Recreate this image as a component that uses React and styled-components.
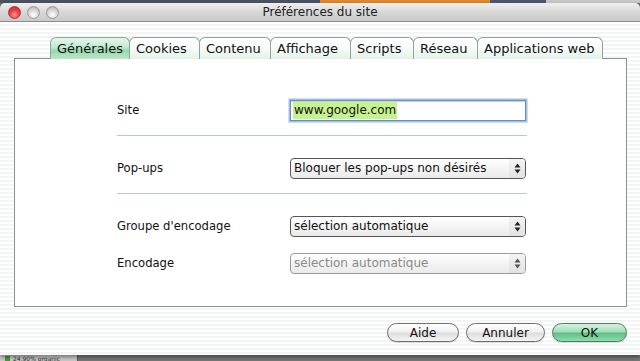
import styled, { createGlobalStyle } from 'styled-components';

const Global = createGlobalStyle`
  html, body {
    margin: 0;
    padding: 0;
    background: #6f6f6f;
  }
  * { box-sizing: border-box; }
`;

const Screen = styled.div`
  width: 640px;
  height: 361px;
  overflow: hidden;
  display: flex;
  flex-direction: column;
  font-family: "DejaVu Sans", "Liberation Sans", sans-serif;
  color: #111;
`;

const TopStrip = styled.div`
  height: 3px;
  display: flex;
  flex-shrink: 0;
`;

const Strip = styled.div`
  width: ${(p) => p.w}px;
  background: ${(p) => p.c};
`;

const Window = styled.div`
  height: 352px;
  flex-shrink: 0;
  display: flex;
  flex-direction: column;
  border-radius: 5px 5px 0 0;
  overflow: hidden;
  box-shadow: 0 2px 4px rgba(0, 0, 0, 0.45);
  position: relative;
  z-index: 1;
`;

const TitleBar = styled.div`
  height: 19px;
  flex-shrink: 0;
  display: flex;
  align-items: center;
  padding-left: 8px;
  background: linear-gradient(#efefef, #d6d6d6 55%, #c9c9c9);
  border-bottom: 1px solid #8e8e8e;
  position: relative;
`;

const Light = styled.div`
  width: 13px;
  height: 13px;
  border-radius: 50%;
  margin-right: 6px;
  border: 1px solid ${(p) => (p.red ? '#b3333a' : '#9a9a9a')};
  background: ${(p) =>
    p.red
      ? 'radial-gradient(circle at 50% 70%, #ff9a9a 0, #f2424c 45%, #c8202a 100%)'
      : 'radial-gradient(circle at 50% 70%, #ffffff 0, #dcdcdc 45%, #a9a9a9 100%)'};
`;

const Title = styled.div`
  position: absolute;
  left: 0;
  right: 0;
  text-align: center;
  font-size: 12px;
  color: #222;
  pointer-events: none;
`;

const Body = styled.div`
  flex: 1;
  display: flex;
  flex-direction: column;
  padding: 15px 13px 0 14px;
  background: repeating-linear-gradient(#ffffff 0 2px, #f3f4f4 2px 4px);
`;

const Tabs = styled.div`
  display: flex;
  margin-left: 36px;
  height: 21px;
  position: relative;
  z-index: 1;
`;

const Tab = styled.div`
  width: ${(p) => p.w}px;
  height: 22px;
  padding-left: 6px;
  margin-right: -1px;
  display: flex;
  align-items: center;
  font-size: 13px;
  color: #111;
  white-space: nowrap;
  border: 1px solid #8ea59a;
  border-bottom: none;
  border-radius: 6px 6px 0 0;
  background: ${(p) =>
    p.active
      ? 'linear-gradient(#e4f7ea, #bfe9cd 45%, #98d8ae 60%, #b8e8c8)'
      : 'linear-gradient(#ffffff, #f6fbf8 50%, #e2f2e8)'};
`;

const Panel = styled.div`
  height: 249px;
  flex-shrink: 0;
  background: #fff;
  border: 1px solid #8a8f8c;
  padding: 40px 0 0 102px;
  display: flex;
  flex-direction: column;
`;

const Row = styled.div`
  display: flex;
  align-items: center;
  height: 22px;
  margin-top: ${(p) => p.top || 0}px;
`;

const Label = styled.div`
  width: 173px;
  font-size: 11.6px;
  color: #111;
`;

const Separator = styled.div`
  width: 410px;
  height: 1px;
  background: #b9cbc5;
  margin-top: 14px;
`;

const Input = styled.div`
  width: 236px;
  height: 21px;
  display: flex;
  align-items: center;
  padding-left: 2px;
  border: 1px solid #6f8fb8;
  background: #fff;
  box-shadow: 0 0 0 1.5px #9dc0e6, inset 0 1px 1px rgba(0, 0, 0, 0.2);
  font-size: 12px;
`;

const Highlight = styled.span`
  background: #c6f38e;
  padding: 1px 1px 2px;
`;

const Select = styled.div`
  width: 236px;
  height: 21px;
  display: flex;
  align-items: center;
  border: 1px solid ${(p) => (p.disabled ? '#9a9a9a' : '#555')};
  border-radius: 4px;
  background: linear-gradient(#ffffff, #f4f4f4 50%, #eaeaea);
  font-size: 12px;
  color: ${(p) => (p.disabled ? '#8a8a8a' : '#111')};
  overflow: hidden;
`;

const SelectText = styled.div`
  flex: 1;
  padding-left: 3px;
  white-space: nowrap;
`;

const Arrows = styled.div`
  width: 16px;
  height: 100%;
  display: flex;
  align-items: center;
  justify-content: center;
  background: linear-gradient(#f4f4f4, #e2e2e2);
`;

const Footer = styled.div`
  display: flex;
  justify-content: flex-end;
  margin-top: 16px;
  gap: 7px;
`;

const Button = styled.div`
  width: ${(p) => p.w}px;
  height: 19px;
  display: flex;
  align-items: center;
  justify-content: center;
  font-size: 12px;
  color: #111;
  border-radius: 10px;
  border: 1px solid ${(p) => (p.primary ? '#4f7e61' : '#6e6e6e')};
  background: ${(p) =>
    p.primary
      ? 'linear-gradient(#d6f3df, #a3dfb8 45%, #5fbf86 55%, #8fdcae)'
      : 'linear-gradient(#ffffff, #f1f1f1 45%, #dedede 55%, #f4f4f4)'};
  box-shadow: 0 1px 1px rgba(0, 0, 0, 0.15);
`;

const Under = styled.div`
  flex: 1;
  display: flex;
  background: #777;
`;

const Legend = styled.div`
  width: 78px;
  display: flex;
  align-items: flex-start;
  padding: 1px 0 0 5px;
  background: #c9c9c9;
  border-right: 1px solid #555;
  font-size: 6px;
  line-height: 6px;
  color: #333;
  gap: 3px;
`;

const Swatch = styled.div`
  width: 5px;
  height: 5px;
  background: #3aa13a;
`;

const Updown = ({ disabled }) => (
  <svg width="7" height="11" viewBox="0 0 7 11">
    <path d="M3.5 0.5 L6.5 4.5 L0.5 4.5 Z" fill={disabled ? '#555' : '#222'} />
    <path d="M3.5 10.5 L6.5 6.5 L0.5 6.5 Z" fill={disabled ? '#555' : '#222'} />
  </svg>
);

const SelectBox = ({ value, disabled }) => (
  <Select disabled={disabled}>
    <SelectText>{value}</SelectText>
    <Arrows>
      <Updown disabled={disabled} />
    </Arrows>
  </Select>
);

const tabs = [
  ['Générales', 80, true],
  ['Cookies', 71],
  ['Contenu', 72],
  ['Affichage', 81],
  ['Scripts', 64],
  ['Réseau', 65],
  ['Applications web', 126],
];

export default function App() {
  return (
    <Screen>
      <Global />
      <TopStrip>
        <Strip w={320} c="#4b5264" />
        <Strip w={170} c="#e0892d" />
        <Strip w={56} c="#4e5570" />
        <Strip w={94} c="#c9c9c9" />
      </TopStrip>
      <Window>
        <TitleBar>
          <Light red />
          <Light />
          <Light />
          <Title>Préférences du site</Title>
        </TitleBar>
        <Body>
          <Tabs>
            {tabs.map(([name, w, active]) => (
              <Tab key={name} w={w} active={active}>
                {name}
              </Tab>
            ))}
          </Tabs>
          <Panel>
            <Row>
              <Label>Site</Label>
              <Input>
                <Highlight>www.google.com</Highlight>
              </Input>
            </Row>
            <Separator />
            <Row top={21}>
              <Label>Pop-ups</Label>
              <SelectBox value="Bloquer les pop-ups non désirés" />
            </Row>
            <Separator />
            <Row top={21}>
              <Label>Groupe d'encodage</Label>
              <SelectBox value="sélection automatique" />
            </Row>
            <Row top={15}>
              <Label>Encodage</Label>
              <SelectBox value="sélection automatique" disabled />
            </Row>
          </Panel>
          <Footer>
            <Button w={72}>Aide</Button>
            <Button w={79}>Annuler</Button>
            <Button w={75} primary>
              OK
            </Button>
          </Footer>
        </Body>
      </Window>
      <Under>
        <Legend>
          <Swatch />
          24.90% organic
        </Legend>
      </Under>
    </Screen>
  );
}
